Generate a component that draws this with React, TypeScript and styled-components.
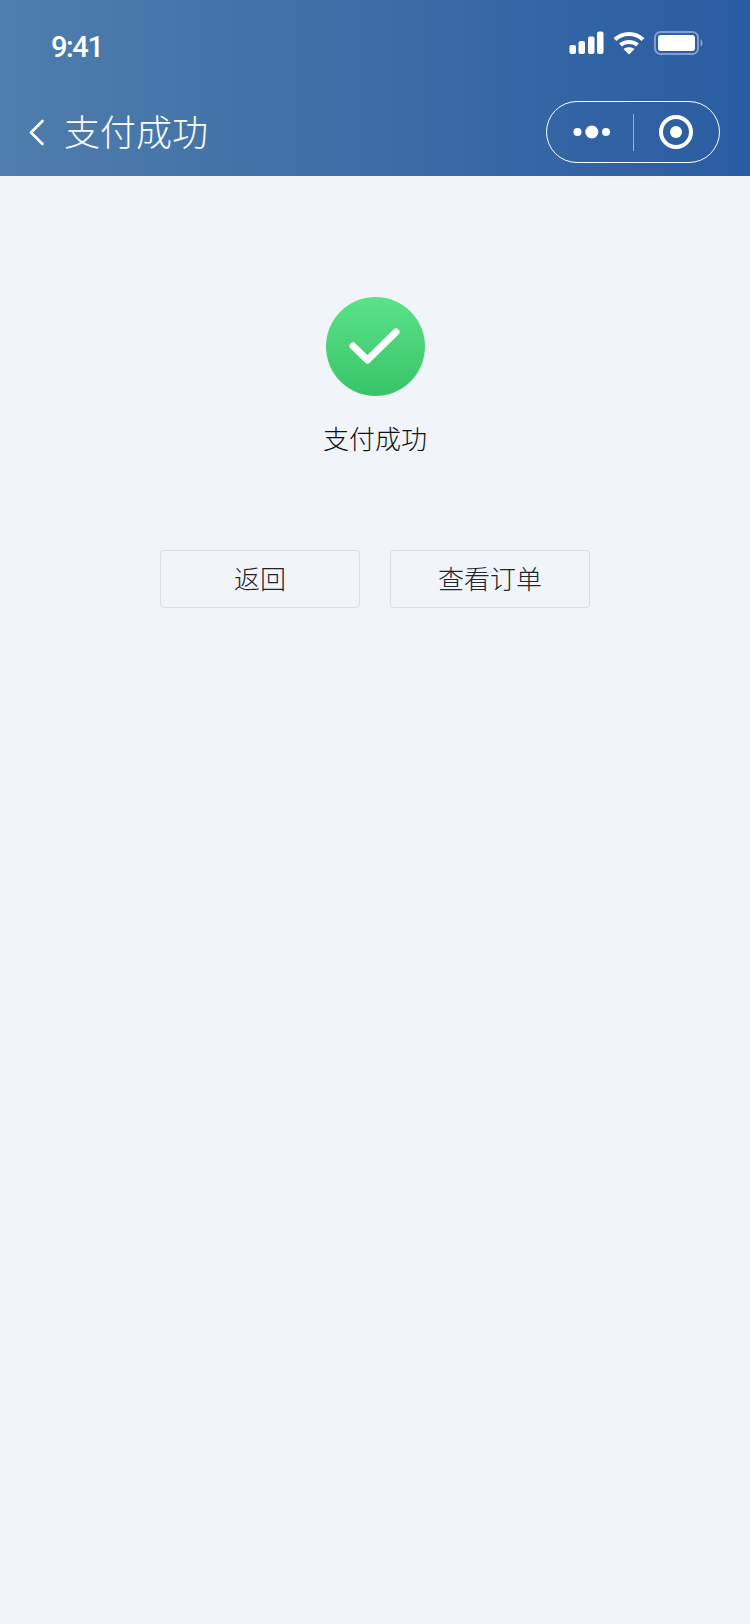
import { FC } from "react"
import styled, { createGlobalStyle } from "styled-components"

const CJK = `"Noto Sans CJK SC", "Noto Sans", sans-serif`

const GlobalStyle = createGlobalStyle`
  html, body {
    margin: 0;
    padding: 0;
    background: #f1f4f9;
  }
  * {
    box-sizing: border-box;
  }
`

const Page = styled.div`
  display: flex;
  flex-direction: column;
  width: 750px;
  height: 1624px;
  background: #f1f4f9;
  font-family: ${CJK};
  overflow: hidden;
`

const Header = styled.header`
  display: flex;
  flex-direction: column;
  height: 176px;
  background: linear-gradient(90deg, #4f7dac 0%, #2a5ca2 100%);
  color: #fff;
`

const StatusBar = styled.div`
  display: flex;
  align-items: center;
  justify-content: space-between;
  height: 88px;
  padding: 4px 47px 0 51px;
`

const Time = styled.span`
  font-family: Roboto, "Noto Sans", sans-serif;
  font-size: 29px;
  font-weight: 500;
  letter-spacing: -1.4px;
  line-height: 30px;
  margin-top: 1px;
`

const StatusIcons = styled.div`
  display: flex;
  align-items: center;
  gap: 9px;
  margin-top: -6px;
`

const NavBar = styled.div`
  display: flex;
  align-items: center;
  justify-content: space-between;
  height: 88px;
  padding: 0 30px 0 28px;
`

const NavLeft = styled.div`
  display: flex;
  align-items: center;
  gap: 18px;
`

const NavTitle = styled.h1`
  margin: 0;
  padding-bottom: 4px;
  font-size: 36px;
  font-weight: 300;
  line-height: 50px;
`

const Capsule = styled.div`
  display: flex;
  align-items: center;
  width: 174px;
  height: 62px;
  border: 1px solid #fff;
  border-radius: 31px;
`

const CapsuleHalf = styled.div`
  display: flex;
  align-items: center;
  justify-content: center;
  flex: 1;
`

const CapsuleDivider = styled.span`
  width: 1px;
  height: 37px;
  background: rgba(255, 255, 255, 0.5);
`

const Main = styled.main`
  display: flex;
  flex-direction: column;
  align-items: center;
  padding-top: 121px;
`

const SuccessBadge = styled.div`
  display: flex;
  align-items: center;
  justify-content: center;
  width: 99px;
  height: 99px;
  border-radius: 50%;
  background: linear-gradient(180deg, #5be28a 0%, #38c468 100%);
`

const Message = styled.p`
  margin: 24px 0 0;
  font-size: 26px;
  font-weight: 300;
  line-height: 36px;
  color: #0e1014;
`

const Actions = styled.div`
  display: flex;
  gap: 30px;
  margin-top: 94px;
`

const ActionButton = styled.button`
  width: 200px;
  height: 58px;
  padding: 0 0 4px;
  background: transparent;
  border: 1px solid #dcdee2;
  border-radius: 4px;
  font-family: ${CJK};
  font-size: 26px;
  font-weight: 300;
  color: #222428;
`

const Signal: FC = () => (
  <svg width="35" height="24" viewBox="0 0 35 24" fill="#fff">
    <rect x="0.5" y="14" width="6.5" height="9" rx="2" />
    <rect x="9.5" y="10" width="6.5" height="13" rx="2" />
    <rect x="19" y="5.5" width="6.5" height="17.5" rx="2" />
    <rect x="28" y="0.5" width="6.5" height="22.5" rx="2" />
  </svg>
)

const Wifi: FC = () => (
  <svg width="32" height="24" viewBox="0 0 32 24" fill="none" stroke="#fff" strokeWidth="4">
    <path d="M2 8.5 C10 1 22 1 30 8.5" />
    <path d="M7.5 14 C12 10 20 10 24.5 14" />
    <path d="M16 23.5 L10.5 18 C13.5 15.5 18.5 15.5 21.5 18 Z" fill="#fff" stroke="none" />
  </svg>
)

const Battery: FC = () => (
  <svg width="49" height="24" viewBox="0 0 49 24" fill="none">
    <rect x="1" y="1" width="43" height="22" rx="5.5" stroke="#fff" strokeOpacity="0.4" strokeWidth="2" />
    <rect x="4" y="4" width="37" height="16" rx="3" fill="#fff" />
    <path d="M46.500 8.500 C48 9 48.500 10.500 48.500 12 C48.500 13.500 48 15 46.500 15.500 Z" fill="#fff" fillOpacity="0.45" />
  </svg>
)

const BackArrow: FC = () => (
  <svg width="18" height="28" viewBox="0 0 18 28" fill="none" stroke="#fff" strokeWidth="2.6" strokeLinecap="round" strokeLinejoin="round">
    <path d="M14.500 3 L3 14.500 L14.500 26" />
  </svg>
)

const MoreDots: FC = () => (
  <svg width="40" height="16" viewBox="0 0 40 16" fill="#fff">
    <circle cx="7.500" cy="8" r="4" />
    <circle cx="21.800" cy="8" r="6.500" />
    <circle cx="36" cy="8" r="4" />
  </svg>
)

const Target: FC = () => (
  <svg width="34" height="34" viewBox="0 0 34 34">
    <circle cx="17" cy="17" r="15" fill="none" stroke="#fff" strokeWidth="4" />
    <circle cx="17" cy="17" r="6" fill="#fff" />
  </svg>
)

const Check: FC = () => (
  <svg width="52" height="40" viewBox="0 0 52 40" fill="none" stroke="#fff" strokeWidth="7" strokeLinecap="round" strokeLinejoin="round">
    <path d="M4 19 L18.500 33 L47 5" />
  </svg>
)

export default function App() {
  return (
    <Page>
      <GlobalStyle />
      <Header>
        <StatusBar>
          <Time>9:41</Time>
          <StatusIcons>
            <Signal />
            <Wifi />
            <Battery />
          </StatusIcons>
        </StatusBar>
        <NavBar>
          <NavLeft>
            <BackArrow />
            <NavTitle>支付成功</NavTitle>
          </NavLeft>
          <Capsule>
            <CapsuleHalf>
              <MoreDots />
            </CapsuleHalf>
            <CapsuleDivider />
            <CapsuleHalf>
              <Target />
            </CapsuleHalf>
          </Capsule>
        </NavBar>
      </Header>
      <Main>
        <SuccessBadge>
          <Check />
        </SuccessBadge>
        <Message>支付成功</Message>
        <Actions>
          <ActionButton>返回</ActionButton>
          <ActionButton>查看订单</ActionButton>
        </Actions>
      </Main>
    </Page>
  )
}
